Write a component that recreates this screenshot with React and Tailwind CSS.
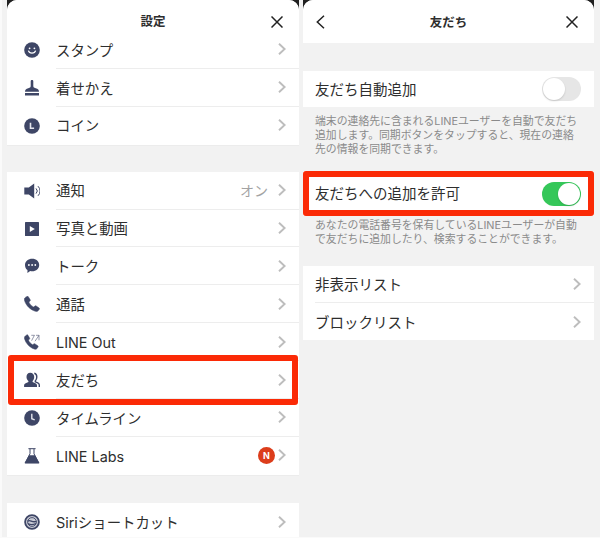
import clsx from "clsx";

const icons = {
  stamp: (
    <>
      <circle cx="8" cy="8" r="7.8" fill="currentColor" />
      <circle cx="5.6" cy="6.3" r="0.9" fill="#fff" />
      <circle cx="10.4" cy="6.3" r="0.9" fill="#fff" />
      <path d="M4.4 8.6a3.7 3.2 0 0 0 7.2 0" fill="none" stroke="#fff" strokeWidth="1.2" />
    </>
  ),
  brush: (
    <path
      d="M6.700 1.200a1.300 1.300 0 0 1 2.600 0V6c0 1.200.7 1.800 2.400 2.200 2.300.5 3.300 1.400 3.300 3.600H1c0-2.200 1-3.100 3.300-3.600C6 7.800 6.700 7.200 6.700 6zM1 13h14v2.600H1z"
      fill="currentColor"
    />
  ),
  coin: (
    <>
      <circle cx="8" cy="8" r="7.8" fill="currentColor" />
      <path d="M6.5 4.800v5.500h3.600" fill="none" stroke="#e4e5ec" strokeWidth="1.6" />
    </>
  ),
  sound: (
    <>
      <path d="M.3 4.500h4.500L10.200.4v15.200l-5.400-4.100H.3z" fill="currentColor" />
      <path
        d="M12 5.400a3.600 3.600 0 0 1 0 5.200M14 3.200a6.600 6.600 0 0 1 0 9.600"
        fill="none"
        stroke="currentColor"
        strokeWidth="1"
      />
    </>
  ),
  media: (
    <>
      <rect x="1" y="1" width="14" height="14" rx="0.6" fill="currentColor" />
      <path d="M5.800 5v6l5-3z" fill="#fff" />
    </>
  ),
  talk: (
    <>
      <path
        d="M8.200.8c4 0 7 2.700 7 6.200s-3 6.300-7 6.300c-.7 0-1.400-.1-2-.2L3.400 15l.1-2.900C1.900 11 1 9.200 1 7 1 3.500 4.200.8 8.200.8z"
        fill="currentColor"
      />
      <circle cx="4.900" cy="7" r="0.9" fill="#fff" />
      <circle cx="8.100" cy="7" r="0.9" fill="#fff" />
      <circle cx="11.300" cy="7" r="0.9" fill="#fff" />
    </>
  ),
  phone: (
    <path
      d="M1.400 1.400 3 .4c.5-.3 1-.2 1.300.3l1.900 3c.3.500.2 1-.2 1.300l-1.200.9c.8 2 2.600 4 4.900 5.200l1.200-1c.4-.4.9-.4 1.300-.1l2.900 2c.5.4.5.900.2 1.300l-1.200 1.500c-.6.7-1.600.8-2.700.5C6.200 13.700 2 9.500.5 4.500.1 3.200.4 2.100 1.400 1.400z"
      fill="currentColor"
      stroke="currentColor"
      strokeWidth="0.5"
    />
  ),
  phoneOut: (
    <>
      <path
        d="M1.400 1.900 2.700 1c.5-.3 1-.2 1.300.3l1.600 2.800c.3.500.2.900-.2 1.200l-1 .8c.8 2 2.300 3.600 4.300 4.700l1.100-.9c.4-.3.8-.3 1.200 0l2.800 1.900c.5.4.5.800.2 1.200l-1 1.500c-.6.8-1.500 1-2.600.6C5.900 13.600 2 9.700.6 5 .2 3.700.5 2.600 1.400 1.900z"
        fill="currentColor"
        stroke="currentColor"
        strokeWidth="0.5"
      />
      <path
        d="M7.300 1.300h3.200M10.400 1.300 7.600 6.700M12 1.300h3v5M15 1.400 11 7.200"
        fill="none"
        stroke="currentColor"
        strokeWidth="0.8"
        opacity="0.7"
      />
    </>
  ),
  friends: (
    <>
      <path
        d="M6.200.8C8.700.8 10.200 2.500 10.200 5c0 1.800-.6 3.100-1.600 4v1l2.800 1.200c1.200.5 1.600 1.200 1.600 2.200V15H.1v-1.600c0-1 .4-1.700 1.600-2.200L4.400 10V9C3.300 8.100 2.500 6.800 2.500 5c0-2.500 1.300-4.200 3.700-4.200z"
        fill="currentColor"
      />
      <path
        d="M10.300 1.300c1.800.3 2.500 1.900 2.500 3.800 0 1.600-.5 2.900-1.500 3.800v.9l2.500 1.100c1 .5 1.500 1.200 1.500 2.200V15"
        fill="none"
        stroke="currentColor"
        strokeWidth="1.4"
      />
    </>
  ),
  clock: (
    <>
      <circle cx="8" cy="8" r="7.800" fill="currentColor" />
      <path d="M7.800 3.700V8.700l2.900 1.100" fill="none" stroke="#e4e5ec" strokeWidth="1.4" />
    </>
  ),
  flask: (
    <>
      <path
        d="M4.400.7h7.200M6 .8v5L1.100 14.900h13.800L10 5.800v-5"
        fill="none"
        stroke="currentColor"
        strokeWidth="1"
      />
      <path d="M5 7.300h6l4.300 8H.7z" fill="currentColor" />
    </>
  ),
  siri: (
    <>
      <circle cx="8" cy="8" r="6.900" fill="#c9cbd5" stroke="currentColor" strokeWidth="1.8" />
      <circle cx="8" cy="8" r="4.400" fill="none" stroke="currentColor" strokeWidth="0.9" />
      <path
        d="M3.700 7.200c2.500-2 4.200 1.800 8.600.2M4 9.400c2.600 2.100 5.400 1.400 8 .1"
        fill="none"
        stroke="currentColor"
        strokeWidth="1.3"
      />
    </>
  ),
};

const mainRows = [
  { icon: "stamp", label: "スタンプ" },
  { icon: "brush", label: "着せかえ" },
  { icon: "coin", label: "コイン" },
];

const featureRows = [
  { icon: "sound", label: "通知", value: "オン" },
  { icon: "media", label: "写真と動画" },
  { icon: "talk", label: "トーク" },
  { icon: "phone", label: "通話" },
  { icon: "phoneOut", label: "LINE Out" },
  { icon: "friends", label: "友だち", marked: true },
  { icon: "clock", label: "タイムライン" },
  { icon: "flask", label: "LINE Labs", badge: "N" },
];

function Chevron() {
  return (
    <svg className="h-3 w-2 shrink-0" viewBox="0 0 8 12" fill="none" stroke="#bdbdbd" strokeWidth="1.9">
      <path d="M1 .8 6.600 6 1 11.200" />
    </svg>
  );
}

function CloseIcon() {
  return (
    <svg className="h-3 w-3" viewBox="0 0 12 12" fill="none" stroke="#222" strokeWidth="1.5">
      <path d="M.5.5l11 11M11.500.5l-11 11" />
    </svg>
  );
}

// Red frame drawn over the row it points at
function Marker({ className }) {
  return <div className={clsx("pointer-events-none absolute z-10 rounded-[3px] border-[#fb2a06]", className)} />;
}

function SettingRow({ icon, label, value, badge, marked, last }) {
  return (
    <div className="relative flex h-[37.9px] items-center bg-white pl-[17px]">
      <svg className="h-4 w-4 shrink-0 text-[#3e4666]" viewBox="0 0 16 16">
        {icons[icon]}
      </svg>
      <div
        className={clsx(
          "ml-4 flex h-full flex-1 items-center border-b pr-[13px]",
          last ? "border-transparent" : "border-[#ededed]"
        )}
      >
        <span className="flex-1 pt-[2px] text-[14.4px] whitespace-nowrap">{label}</span>
        {value && <span className="mr-[10px] pt-px text-[14px] text-[#a3a3a3]">{value}</span>}
        {badge && (
          <span className="mr-[3px] flex h-[17px] w-[17px] items-center justify-center rounded-full bg-[#dc3d1b] text-[9px] font-bold text-white">
            {badge}
          </span>
        )}
        <Chevron />
      </div>
      {marked && <Marker className="-top-[6px] left-px h-[49.5px] w-[290px] border-[6px]" />}
    </div>
  );
}

function SettingsScreen() {
  return (
    <div className="h-[537px] w-[292px] shrink-0 overflow-hidden bg-[#202020]">
      <div className="h-full rounded-t-[10px] bg-[#f2f2f2]">
        <header className="relative flex h-[31px] items-end justify-center rounded-t-[10px] bg-white">
          <h1 className="text-[12.5px] leading-[18px] font-bold">設定</h1>
          <button className="absolute top-4 right-4" aria-label="閉じる">
            <CloseIcon />
          </button>
        </header>
        {mainRows.map((row, i) => (
          <SettingRow key={row.icon} {...row} last={i === mainRows.length - 1} />
        ))}
        <div className="h-[27px] border-t border-[#ececec]" />
        {featureRows.map((row, i) => (
          <SettingRow key={row.icon} {...row} last={i === featureRows.length - 1} />
        ))}
        <div className="h-[28.3px] border-t border-[#ececec]" />
        <SettingRow icon="siri" label="Siriショートカット" last />
      </div>
    </div>
  );
}

function Toggle({ on }) {
  return (
    <div
      className={clsx(
        "flex h-6 w-[39px] items-center rounded-full p-px",
        on ? "justify-end bg-[#35c759]" : "justify-start bg-[#e6e6e6]"
      )}
    >
      <div className="h-[22px] w-[22px] rounded-full bg-white shadow-[0_1px_2px_rgba(0,0,0,0.15)]" />
    </div>
  );
}

function FriendsScreen() {
  return (
    <div className="h-[537px] w-[291px] shrink-0 overflow-hidden bg-[#202020]">
      <div className="h-full rounded-t-[10px] bg-[#f2f2f2]">
        <header className="relative flex h-[43px] items-center justify-center rounded-t-[10px] bg-white">
          <button className="absolute top-[15px] left-[13px]" aria-label="戻る">
            <svg className="h-[14px] w-[9px]" viewBox="0 0 9 14" fill="none" stroke="#222" strokeWidth="1.5">
              <path d="M8 .7 1.300 7 8 13.300" />
            </svg>
          </button>
          <h1 className="pt-[3px] text-[12.5px] font-bold">友だち</h1>
          <button className="absolute top-4 right-4" aria-label="閉じる">
            <CloseIcon />
          </button>
        </header>

        <div className="mt-7 flex h-9 items-center justify-between bg-white pr-[13px] pl-3 text-[14.5px]">
          <span className="pt-[2px]">友だち自動追加</span>
          <Toggle />
        </div>
        <p className="h-[64px] pt-2 pl-3 text-[10.85px] leading-[13.8px] whitespace-nowrap text-[#8a8a8a]">
          端末の連絡先に含まれるLINEユーザーを自動で友だち
          <br />
          追加します。同期ボタンをタップすると、現在の連絡
          <br />
          先の情報を同期できます。
        </p>

        <div className="relative flex h-[45px] items-center justify-between bg-white pr-[13px] pl-3 text-[14.5px]">
          <span className="pt-px">友だちへの追加を許可</span>
          <Toggle on />
          <Marker className="inset-0 border-[6px]" />
        </div>
        <p className="h-[50px] pt-[3px] pl-3 text-[10.85px] leading-[13.8px] whitespace-nowrap text-[#8a8a8a]">
          あなたの電話番号を保有しているLINEユーザーが自動
          <br />
          で友だちに追加したり、検索することができます。
        </p>

        <div className="bg-white pl-3 text-[14.5px]">
          <div className="flex h-[37px] items-center justify-between border-b border-[#ededed] pr-[13px]">
            <span className="pt-[2px]">非表示リスト</span>
            <Chevron />
          </div>
          <div className="flex h-[37px] items-center justify-between pr-[13px]">
            <span className="pt-[2px]">ブロックリスト</span>
            <Chevron />
          </div>
        </div>
      </div>
    </div>
  );
}

export default function App() {
  return (
    <main className="flex h-[538px] w-[600px] gap-1 overflow-hidden border-b border-l-2 border-[#fafafa] bg-[#f2f2f2] pl-[5px] font-['Inter','Noto_Sans_CJK_JP',sans-serif] text-[#2e2e2e]">
      <SettingsScreen />
      <FriendsScreen />
    </main>
  );
}
